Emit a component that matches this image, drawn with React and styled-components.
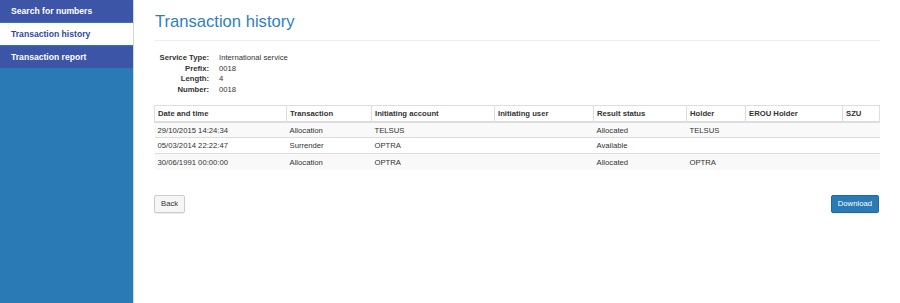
import React from 'react';
import styled, { createGlobalStyle } from 'styled-components';

const GlobalStyle = createGlobalStyle`
    *, *::before, *::after { box-sizing: border-box; }
    html, body {
        margin: 0;
        padding: 0;
        background: #fff;
        font-family: "Liberation Sans", Arial, sans-serif;
        color: #333;
    }
`;

const Page = styled.div`
    display: flex;
    width: 900px;
    height: 303px;
    overflow: hidden;
`;

const Sidebar = styled.nav`
    width: 134px;
    flex-shrink: 0;
    background: #2a7ab6;
    border-right: 1px solid #c9d4f0;
    display: flex;
    flex-direction: column;
    gap: 1px;
`;

const NavItem = styled.a`
    display: block;
    height: 22px;
    line-height: 22px;
    padding-left: 11px;
    font-size: 8.6px;
    font-weight: bold;
    text-decoration: none;
    background: ${p => (p.active ? '#fff' : '#3c55a6')};
    color: ${p => (p.active ? '#2e4a9a' : '#fff')};
`;

const Main = styled.main`
    flex: 1;
    padding: 0 20px;
`;

const Title = styled.h1`
    margin: 0;
    padding: 11px 0 7px 1px;
    font-size: 16.6px;
    font-weight: normal;
    color: #2f7fbb;
    line-height: 22px;
    border-bottom: 1px solid #eee;
`;

const Info = styled.dl`
    display: grid;
    grid-template-columns: 55px auto;
    column-gap: 10px;
    margin: 12px 0 0 0;
    font-size: 7.7px;
    line-height: 10.6px;
`;

const Label = styled.dt`
    font-weight: bold;
    text-align: right;
`;

const Value = styled.dd`
    margin: 0;
`;

const Table = styled.table`
    margin-top: 10px;
    width: 725px;
    border-collapse: collapse;
    font-size: 7.7px;
    table-layout: fixed;
`;

const Th = styled.th`
    text-align: left;
    font-weight: bold;
    padding: 0 3px;
    height: 16px;
    border: 1px solid #ddd;
    border-bottom: 2px solid #ddd;
    width: ${p => p.w}px;
`;

const Row = styled.tr`
    background: ${p => (p.striped ? '#f9f9f9' : '#fff')};
`;

const Td = styled.td`
    padding: 0 3px;
    height: 16px;
    border-top: 1px solid #ddd;
    white-space: nowrap;
`;

const Actions = styled.div`
    display: flex;
    justify-content: space-between;
    width: 725px;
    margin-top: 25px;
`;

const Button = styled.button`
    font-family: inherit;
    font-size: 7.7px;
    height: 18px;
    padding: 0 6px;
    border-radius: 2px;
    border: 1px solid ${p => (p.primary ? '#22689d' : '#ccc')};
    background: ${p => (p.primary ? '#2a7ab6' : '#f6f6f6')};
    color: ${p => (p.primary ? '#fff' : '#333')};
    box-shadow: 0 1px 1px rgba(0, 0, 0, 0.08);
`;

const columns = [
    ['Date and time', 132],
    ['Transaction', 85],
    ['Initiating account', 123],
    ['Initiating user', 99],
    ['Result status', 93],
    ['Holder', 59],
    ['EROU Holder', 97],
    ['SZU', 37],
];

const rows = [
    ['29/10/2015 14:24:34', 'Allocation', 'TELSUS', '', 'Allocated', 'TELSUS', '', ''],
    ['05/03/2014 22:22:47', 'Surrender', 'OPTRA', '', 'Available', '', '', ''],
    ['30/06/1991 00:00:00', 'Allocation', 'OPTRA', '', 'Allocated', 'OPTRA', '', ''],
];

export default function App() {
    return (
        <>
            <GlobalStyle />
            <Page>
                <Sidebar>
                    <NavItem href='#'>Search for numbers</NavItem>
                    <NavItem href='#' active>Transaction history</NavItem>
                    <NavItem href='#'>Transaction report</NavItem>
                </Sidebar>
                <Main>
                    <Title>Transaction history</Title>
                    <Info>
                        <Label>Service Type:</Label><Value>International service</Value>
                        <Label>Prefix:</Label><Value>0018</Value>
                        <Label>Length:</Label><Value>4</Value>
                        <Label>Number:</Label><Value>0018</Value>
                    </Info>
                    <Table>
                        <thead>
                            <tr>
                                {columns.map(([name, w]) => <Th key={name} w={w}>{name}</Th>)}
                            </tr>
                        </thead>
                        <tbody>
                            {rows.map((r, i) => (
                                <Row key={i} striped={i % 2 === 0}>
                                    {r.map((c, j) => <Td key={j}>{c}</Td>)}
                                </Row>
                            ))}
                        </tbody>
                    </Table>
                    <Actions>
                        <Button>Back</Button>
                        <Button primary>Download</Button>
                    </Actions>
                </Main>
            </Page>
        </>
    );
}
